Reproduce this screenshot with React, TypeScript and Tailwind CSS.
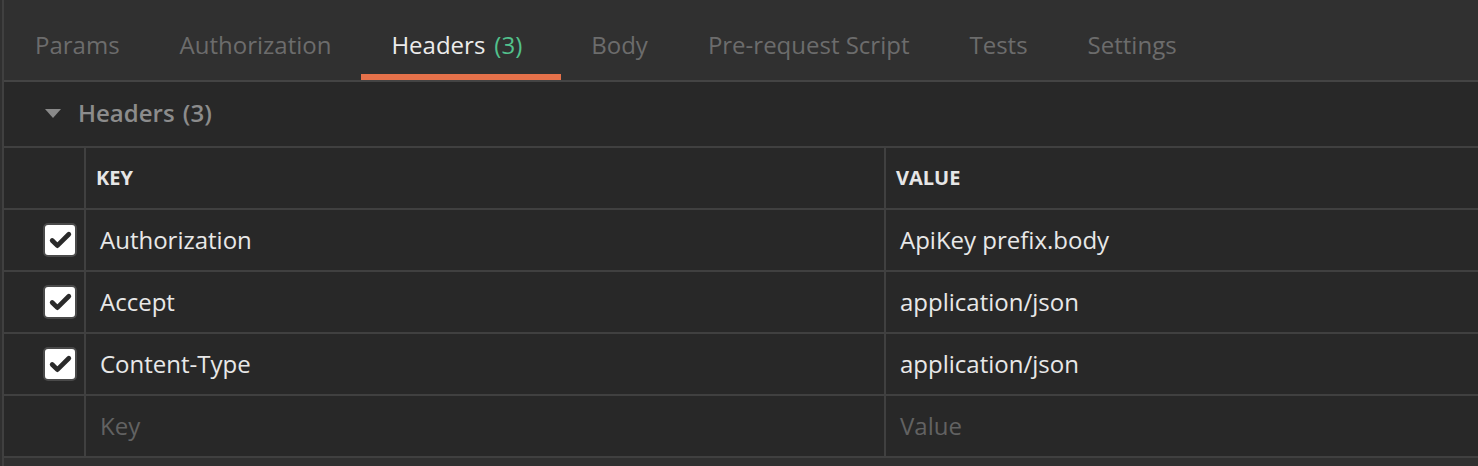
import { Check } from "lucide-react";

const tabs = [
  { label: "Params" },
  { label: "Authorization" },
  { label: "Headers", count: 3, active: true },
  { label: "Body" },
  { label: "Pre-request Script" },
  { label: "Tests" },
  { label: "Settings" },
];

const headers = [
  { key: "Authorization", value: "ApiKey prefix.body" },
  { key: "Accept", value: "application/json" },
  { key: "Content-Type", value: "application/json" },
];

function Checkbox() {
  return (
    <div className="flex h-[34px] w-[34px] items-center justify-center rounded-[5px] border-2 border-[#4a4a4a] bg-white">
      <Check size={25} strokeWidth={4.5} className="text-[#2a2a2a]" />
    </div>
  );
}

export default function App() {
  return (
    <div
      className="h-[466px] w-full bg-[#303030] pl-[2px]"
      style={{ fontFamily: '"Open Sans", "Noto Sans", sans-serif' }}
    >
      <div className="h-full border-l-2 border-[#404040]">
        {/* tab strip */}
        <div className="flex h-[82px] border-b-2 border-[#444444] bg-[#303030] pl-[1px]">
          {tabs.map((t) => (
            <div
              key={t.label}
              className={
                "relative flex items-center px-[30px] pt-[10px] text-[24px] " +
                (t.active ? "text-[#ececec]" : "text-[#6c6c6c]")
              }
            >
              <span>{t.label}</span>
              {t.count !== undefined && (
                <span className="ml-[9px] mr-[9px] text-[#52c18c]">({t.count})</span>
              )}
              {t.active && (
                <div className="absolute bottom-0 left-0 right-0 h-[6px] bg-[#e5714a]" />
              )}
            </div>
          ))}
        </div>

        {/* section header */}
        <div className="flex h-[66px] items-center border-b-2 border-[#404040] bg-[#282828] pb-[2px] pl-[40px]">
          <svg width="18" height="12" viewBox="0 0 18 12" className="mr-[16px]">
            <path d="M1 2 L17 2 L9 11 Z" fill="#8a8a8a" />
          </svg>
          <span className="text-[24px] font-semibold text-[#8c8c8c]">
            Headers <span className="ml-[2px]">(3)</span>
          </span>
        </div>

        {/* table */}
        <div className="bg-[#282828]">
          <div className="grid h-[62px] grid-cols-[82px_800px_1fr] border-b-2 border-[#404040]">
            <div className="border-r-2 border-[#404040]" />
            <div className="flex items-center border-r-2 border-[#404040] pl-[10px] text-[20px] font-bold text-[#e6e6e6]">
              KEY
            </div>
            <div className="flex items-center pl-[10px] text-[20px] font-bold text-[#e6e6e6]">
              VALUE
            </div>
          </div>

          {headers.map((h) => (
            <div
              key={h.key}
              className="grid h-[62px] grid-cols-[82px_800px_1fr] border-b-2 border-[#404040]"
            >
              <div className="flex items-center justify-end border-r-2 border-[#404040] pr-[7px]">
                <Checkbox />
              </div>
              <div className="flex items-center border-r-2 border-[#404040] pl-[14px] text-[24px] text-[#e8e8e8]">
                {h.key}
              </div>
              <div className="flex items-center pl-[14px] text-[24px] text-[#e8e8e8]">
                {h.value}
              </div>
            </div>
          ))}

          <div className="grid h-[62px] grid-cols-[82px_800px_1fr] border-b-2 border-[#404040]">
            <div className="border-r-2 border-[#404040]" />
            <div className="flex items-center border-r-2 border-[#404040] pl-[14px] text-[24px] text-[#626262]">
              Key
            </div>
            <div className="flex items-center pl-[14px] text-[24px] text-[#626262]">
              Value
            </div>
          </div>
        </div>
      </div>
    </div>
  );
}
